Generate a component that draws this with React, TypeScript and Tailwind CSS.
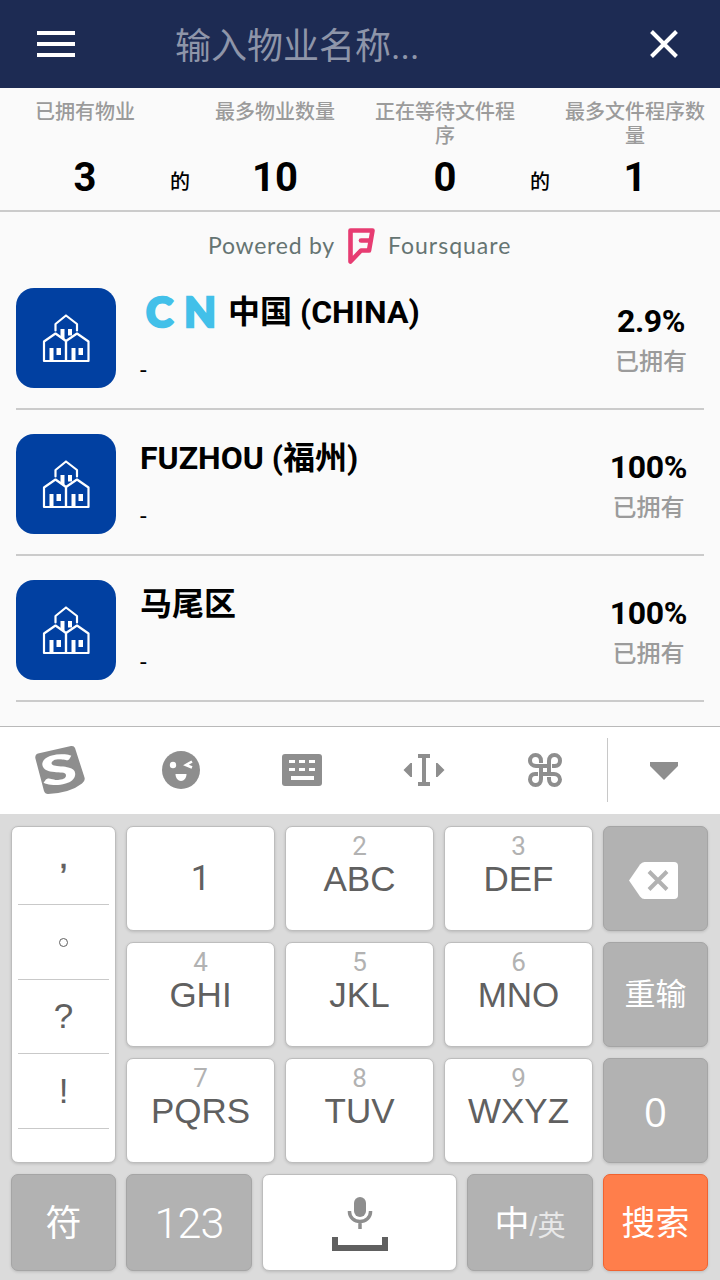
import React from 'react';

const cjk = "font-[Roboto,'Noto_Sans_CJK_SC',sans-serif]";
const arial = "font-['Liberation_Sans','Noto_Sans_CJK_SC',sans-serif]";

function Stat({ label, value }: { label: string; value: string }) {
  return (
    <div className="flex w-[170px] flex-col items-center px-[15px]">
      <div className="h-12 text-center text-[20px] leading-6 font-medium text-[#9b9b9b]">{label}</div>
      <div className="mt-[6px] text-[40px] leading-[48px] font-bold text-black">{value}</div>
    </div>
  );
}

function Of() {
  return (
    <div className="flex w-5 items-end justify-center pb-[16px] text-[20px] leading-6 font-medium text-black">的</div>
  );
}

function Houses() {
  return (
    <svg width="100" height="100" viewBox="0 0 100 100" fill="none" stroke="#fff" strokeWidth="2.200" strokeLinejoin="round" strokeLinecap="round">
      <path d="M39.500 42.500V36L50 27.500L61 36V42.500" />
      <path d="M28 73V53.500L39.500 45.500L50 53V73Z" />
      <path d="M50 73V53L61 45.500L72.500 53.500V73Z" />
      <path fill="#fff" stroke="none" d="M44.500 41H48.500V51.500L44.500 48.500ZM52 41H56V47.500H52ZM33.500 60H37.500V73H33.500ZM40.500 60H45V67H40.500ZM55.500 60H59.500V73H55.500ZM62.500 60H67V67H62.500Z" />
    </svg>
  );
}

function Property({ title, flag, share }: { title: string; flag?: boolean; share: string }) {
  return (
    <div className="mx-4 flex h-[146px] shrink-0 border-b-2 border-[#cbcbcb] pt-6">
      <div className="h-[100px] w-[100px] rounded-[18px] bg-[#0140a1]">
        <Houses />
      </div>
      <div className="ml-6 flex flex-1 flex-col">
        <div className="flex h-12 items-center text-[32px] leading-[48px] font-bold text-black">
          {flag && (
            <span className="mr-[12px] ml-[6px] flex w-[70px] justify-between font-[Lato] text-[41px] leading-[48px] font-black text-[#42c0e9] [-webkit-text-stroke:2.5px_#42c0e9]">
              <span>C</span>
              <span>N</span>
            </span>
          )}
          <span className="whitespace-nowrap">{title}</span>
        </div>
        <div className="mt-[20px] text-[24px] leading-[28px] text-black">-</div>
      </div>
      <div className="flex flex-col items-center pt-3 pr-[17px]">
        <div className="text-[32px] leading-[42px] font-bold tracking-[-0.4px] text-black">{share}</div>
        <div className="mt-[2px] text-[24px] leading-[36px] font-medium text-[#9b9b9b]">已拥有</div>
      </div>
    </div>
  );
}

const light = 'border-[#bdbdbd] bg-white text-[#606060]';
const gray = 'border-[#a5a5a5] bg-[#b2b2b2] text-white';

function Key({ className, children }: { className: string; children: React.ReactNode }) {
  return (
    <div className={`flex flex-col items-center rounded-[7px] border shadow-[0_1px_3px_rgba(0,0,0,0.15)] ${className}`}>
      {children}
    </div>
  );
}

function Letters({ digit, text }: { digit?: string; text: string }) {
  return (
    <Key className={`h-[105px] w-[149px] ${light}`}>
      <div className="mt-[4px] h-[30px] font-[Roboto] text-[26px] leading-[30px] text-[#b2b2b2]">{digit}</div>
      <div className={`-mt-px text-[35px] leading-[38px] ${digit ? '' : 'font-[Roboto]'}`}>{text}</div>
    </Key>
  );
}

export default function App() {
  return (
    <div className={`flex h-[1280px] w-[720px] flex-col overflow-hidden bg-[#fafafa] ${cjk}`}>
      <header className="flex h-[88px] shrink-0 items-center bg-[#1d2b53]">
        <div className="ml-[37px] flex w-[38px] flex-col gap-[7px] pb-px">
          <div className="h-1 bg-white" />
          <div className="h-1 bg-white" />
          <div className="h-1 bg-white" />
        </div>
        <div className="ml-[100px] flex-1 pt-[5px] text-[36px] leading-[52px] text-[#8e95a9]">输入物业名称...</div>
        <svg className="mr-[42px]" width="28" height="28" viewBox="0 0 28 28" stroke="#fff" strokeWidth="4">
          <path d="M1.500 1.500L26.500 26.500M26.500 1.500L1.500 26.500" />
        </svg>
      </header>

      <section className="flex h-[124px] shrink-0 border-b-2 border-[#cbcbcb] pt-3">
        <Stat label="已拥有物业" value="3" />
        <Of />
        <Stat label="最多物业数量" value="10" />
        <Stat label="正在等待文件程序" value="0" />
        <Of />
        <Stat label="最多文件程序数量" value="1" />
      </section>

      <div className="flex h-[52px] shrink-0 items-start pl-[208px] font-[Lato] text-[23px] leading-[66px] tracking-[0.75px] text-[#657472]">
        <span className="w-[139px] whitespace-nowrap">Powered by</span>
        <svg className="mt-4 shrink-0" width="28" height="36" viewBox="0 0 28 36" fill="none" stroke="#e73c72" strokeWidth="4.600" strokeLinejoin="round" strokeLinecap="round">
          <path d="M3.500 2.500H25.500L22 22.500H14L3.500 33.500Z" />
          <path d="M14 12.500H23" />
        </svg>
        <span className="ml-[13px] tracking-[1px]">Foursquare</span>
      </div>

      <main className="flex h-[462px] shrink-0 flex-col overflow-hidden">
        <Property title="中国 (CHINA)" flag share="2.9%" />
        <Property title="FUZHOU (福州)" share="100%" />
        <Property title="马尾区" share="100%" />
      </main>

      <div className="flex h-[88px] shrink-0 items-center border-t border-[#b9b9b9] bg-white">
        <svg width="720" height="87" viewBox="0 727 720 87" fill="#8e8e8e">
          <path d="M38 753.500L71 746Q74 745.500 75 748L84.500 777.500Q85.500 781 82 783.500Q70 793 48 794Q45 794 44 791L35.300 758Q35 754.500 38 753.500Z" />
          <text transform="translate(43 786.500) rotate(-7) skewX(3) scale(1.6 1)" fill="#fff" fontFamily="Lato" fontWeight="900" fontSize="41">S</text>
          <circle cx="181" cy="770" r="19" />
          <circle cx="173" cy="765" r="3.200" fill="#fff" />
          <path d="M192 761.500L186 765L192 767.500" fill="none" stroke="#fff" strokeWidth="2.600" />
          <path d="M175.500 774H186.500C186.500 778 184 781 181 781S175.500 778 175.500 774Z" fill="#fff" />
          <rect x="282" y="754" width="40" height="32" rx="3" />
          <path fill="#fff" d="M289 760h6v3h-6zM299 760h6v3h-6zM309 760h6v3h-6zM289 768h6v3h-6zM299 768h6v3h-6zM309 768h6v3h-6zM291 776h23v4h-23z" />
          <path d="M418 754h12v4h-4v24h4v4h-12v-4h4v-24h-4zM403.500 770L410.500 763H412V777H410.500zM444.500 770L437.500 763H436V777H437.500z" />
          <g fill="none" stroke="#8e8e8e" strokeWidth="4">
            <path d="M541 763V761C541 757 538.500 755 535.500 755A5.500 5.500 0 0 0 530 760.500C530 764 533 766 536 766H551" />
            <path d="M552 766H555C558 766 560 764 560 760.500A5.500 5.500 0 0 0 554.500 755C551 755 549 757.500 549 761V774" />
            <path d="M549 777V779C549 783 551.500 785 554.500 785A5.500 5.500 0 0 0 560 779.500C560 776 557 774 554 774H539" />
            <path d="M538 774H535C532 774 530 776 530 779.500A5.500 5.500 0 0 0 535.500 785C539 785 541 782.500 541 779V766" />
          </g>
          <path d="M607 738h1v64h-1z" fill="#c8c8c8" />
          <path d="M650 762H678V766L664 780L650 766Z" />
        </svg>
      </div>

      <div className={`flex flex-1 flex-col gap-[11px] bg-[#dbdbdb] pt-3 pl-[11px] ${arial}`}>
        <div className="flex gap-[10px]">
          <Key className={`h-[337px] w-[105px] px-[6px] ${light}`}>
            <div className="h-[78px] w-full border-b border-[#c9c9c9] text-center text-[36px] leading-[58px] [-webkit-text-stroke:0.5px_#606060]">,</div>
            <div className="flex h-[75px] w-full justify-center border-b border-[#c9c9c9] pt-[33px]">
              <div className="h-[9px] w-[9px] rounded-full border-[1.5px] border-[#606060]" />
            </div>
            <div className="h-[74px] w-full border-b border-[#c9c9c9] text-center text-[35px] leading-[72px]">?</div>
            <div className="h-[75px] w-full border-b border-[#c9c9c9] text-center text-[35px] leading-[74px]">!</div>
          </Key>
          <div className="grid grid-cols-[149px_149px_149px] gap-x-[10px] gap-y-[11px]">
            <Letters text="1" />
            <Letters digit="2" text="ABC" />
            <Letters digit="3" text="DEF" />
            <Letters digit="4" text="GHI" />
            <Letters digit="5" text="JKL" />
            <Letters digit="6" text="MNO" />
            <Letters digit="7" text="PQRS" />
            <Letters digit="8" text="TUV" />
            <Letters digit="9" text="WXYZ" />
          </div>
          <div className="flex flex-col gap-[11px]">
            <Key className={`h-[105px] w-[105px] justify-center ${gray}`}>
              <svg className="mt-[3px] mr-[4px]" width="49" height="37" viewBox="0 0 49 37">
                <path d="M0 18.500L11 2.500Q13 0 15.500 0H45Q49 0 49 4V33Q49 37 45 37H15.500Q13 37 11 34.500Z" fill="#fff" />
                <path d="M20 9.500L38 27.500M38 9.500L20 27.500" stroke="#b2b2b2" strokeWidth="4" />
              </svg>
            </Key>
            <Key className={`h-[105px] w-[105px] justify-center text-[31px] leading-[44px] ${gray}`}>重输</Key>
            <Key className={`h-[105px] w-[105px] justify-center pt-[3px] font-['Open_Sans'] text-[40px] leading-[44px] font-normal ${gray}`}>0</Key>
          </div>
        </div>
        <div className="flex gap-[10px]">
          <Key className={`h-[97px] w-[105px] justify-center pt-[3px] text-[36px] leading-[44px] ${gray}`}>符</Key>
          <Key className={`h-[97px] w-[126px] justify-center font-[Roboto] text-[43px] leading-[44px] font-light tracking-[-0.8px] ${gray}`}>123</Key>
          <Key className={`h-[97px] w-[195px] pt-[22px] ${light}`}>
            <svg width="56" height="54" viewBox="0 0 56 54">
              <rect x="22" y="0" width="12" height="20" rx="6" fill="#8e8e8e" />
              <path d="M17.500 14V15A10.500 9.500 0 0 0 38.500 15V14M28 25V32" fill="none" stroke="#8e8e8e" strokeWidth="3.500" />
              <path d="M3 40V51H53V40" fill="none" stroke="#606060" strokeWidth="6" />
            </svg>
          </Key>
          <Key className={`h-[97px] w-[126px] justify-center pt-[6px] ${gray}`}>
            <div className="flex items-baseline text-[35px] leading-[44px]">
              中<span className="text-[28px] text-[#e8e8e8]">/英</span>
            </div>
          </Key>
          <Key className="h-[97px] w-[105px] justify-center border-[#f1622f] bg-[#ff7e4b] text-[34px] leading-[44px] text-white">搜索</Key>
        </div>
      </div>
    </div>
  );
}
